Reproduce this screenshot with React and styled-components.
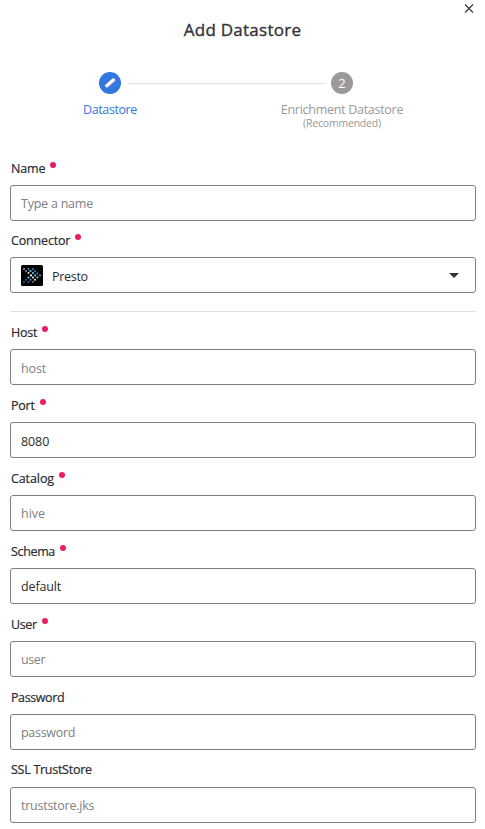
import React from "react";
import styled, { createGlobalStyle } from "styled-components";

const Global = createGlobalStyle`
  * { box-sizing: border-box; }
  body { margin: 0; background: #fff; color: #2b2b33; font-family: "Open Sans", "Noto Sans", sans-serif; font-size: 12.5px; }
`;

const Dialog = styled.main`
  width: 485px;
  height: 829px;
  overflow: hidden;
  background: #fff;
  display: flex;
  flex-direction: column;
`;
const TopBar = styled.div`
  display: flex;
  justify-content: flex-end;
  height: 16px;
  padding: 4px 11px 0 0;
`;
const CloseButton = styled.button`
  display: flex;
  width: 10px;
  height: 10px;
  padding: 0;
  border: 0;
  background: none;
`;
const Title = styled.h1`
  margin: 0;
  height: 28px;
  line-height: 28px;
  text-align: center;
  font-size: 17px;
  font-weight: 500;
  -webkit-text-stroke: 0.35px currentColor;
  color: #333338;
  letter-spacing: 0.25px;
`;
const Stepper = styled.div`
  display: grid;
  grid-template-columns: 22px 198px 22px;
  column-gap: 6px;
  margin: 28px 0 0 99px;
  height: 85px;
  align-items: start;
`;
const Step = styled.div`
  display: flex;
  flex-direction: column;
  align-items: center;
  width: 22px;
  white-space: nowrap;
  color: ${(p) => (p.$active ? "#3377e0" : "#999")};
`;
const StepDot = styled.div`
  display: flex;
  align-items: center;
  justify-content: center;
  width: 22px;
  height: 22px;
  border-radius: 50%;
  color: #fff;
  font-size: 13px;
  background: ${(p) => (p.$active ? "#3377e0" : "#9a9a9a")};
`;
const StepName = styled.div`
  margin-top: 8px;
  line-height: 16px;
  letter-spacing: ${(p) => p.$track || 0}px;
`;
const StepNote = styled.div`
  line-height: 10px;
  font-size: 10.5px;
  letter-spacing: -0.2px;
`;
const StepLine = styled.div`
  height: 1px;
  margin: 11px -1px 0 1px;
  background: #e0e0e0;
`;
const Form = styled.form`
  display: flex;
  flex-direction: column;
  gap: 9px;
  padding: 0 9px 0 10px;
`;
const Group = styled.div`
  display: flex;
  flex-direction: column;
  gap: 8px;
`;
const FieldRow = styled.div`
  display: flex;
  flex-direction: column;
`;
const Label = styled.label`
  display: flex;
  height: 28px;
  padding-left: 1px;
  line-height: ${(p) => (p.$raised ? 22 : 24)}px;
  font-weight: 500;
  -webkit-text-stroke: 0.2px currentColor;
  letter-spacing: ${(p) => p.$track || 0}px;
`;
const Required = styled.span`
  width: 6px;
  height: 6px;
  margin: 5px 0 0 5px;
  border-radius: 50%;
  background: #e91e63;
`;
const Input = styled.input`
  height: 36px;
  width: 100%;
  padding: ${(p) => (p.$lowered ? 2 : 0)}px 10px 0;
  border: 1px solid #808080;
  border-radius: 3px;
  outline: 0;
  background: #fff;
  color: #2b2b2b;
  font: inherit;
  letter-spacing: ${(p) => p.$track || 0}px;
  &::placeholder { color: #808080; opacity: 1; }
`;
const Select = styled.div`
  display: flex;
  align-items: center;
  height: 36px;
  padding: 0 16px 0 10px;
  border: 1px solid #808080;
  border-radius: 3px;
`;
const SelectValue = styled.span`
  flex: 1;
  padding: 2px 0 0 9px;
  letter-spacing: -0.3px;
`;
const Divider = styled.hr`
  width: 100%;
  height: 1px;
  margin: 9px 0 0;
  border: 0;
  background: #e0e0e0;
`;

const logoDots = [
  [3, 4, "#9a9a9a"], [7.5, 4, "#4f86d8"], [12, 4, "#3f78c8"],
  [5, 6, "#8a8a8a"], [9.5, 6, "#5dd5e4"], [14, 6.2, "#3f78c8"],
  [7.5, 8, "#d8d8d8"], [12, 8, "#5dd5e4"], [16.3, 8.3, "#3f78c8"],
  [10, 10.4, "#f0f0f0"], [14.3, 10.4, "#5dd5e4"], [19, 10.4, "#4f86d8"],
  [7.5, 12.5, "#a8c0e8"], [12, 12.5, "#f0f0f0"], [16.3, 12.5, "#5dd5e4"],
  [5, 14.7, "#34599c"], [9.5, 14.7, "#5b82cc"], [14, 14.7, "#e0e0e0"],
  [3, 17, "#34599c"], [7.5, 17, "#34599c"], [12, 17, "#4a70b8"],
];

function PrestoLogo() {
  return (
    <svg width="22" height="21" viewBox="0 0 22 21">
      <rect width="22" height="21" rx="1.5" fill="#000" />
      {logoDots.map(([x, y, c]) => (
        <circle key={`${x}-${y}`} cx={x} cy={y} r="1.05" fill={c} />
      ))}
    </svg>
  );
}

function Field({ label, track, raised, required, children }) {
  return (
    <FieldRow>
      <Label $track={track} $raised={raised}>{label}{required && <Required />}</Label>
      {children}
    </FieldRow>
  );
}

export default function App() {
  return (
    <Dialog>
      <Global />
      <TopBar>
        <CloseButton aria-label="Close">
          <svg width="10" height="10" viewBox="0 0 10 10" stroke="#333" strokeWidth="1.1"><path d="M1 0.5l8 8M9 0.5l-8 8" /></svg>
        </CloseButton>
      </TopBar>
      <Title>Add Datastore</Title>
      <Stepper>
        <Step $active>
          <StepDot $active>
            <svg width="22" height="22" viewBox="0 0 22 22" fill="none" strokeLinecap="round">
              <path d="M8.2 14.2l6.8-6" stroke="#f3a6ea" strokeWidth="2.6" />
              <path d="M7.6 13.7l6.8-6" stroke="#fff" strokeWidth="2.9" />
            </svg>
          </StepDot>
          <StepName $track={-0.4}>Datastore</StepName>
        </Step>
        <StepLine />
        <Step>
          <StepDot>2</StepDot>
          <StepName $track={-0.28}>Enrichment Datastore</StepName>
          <StepNote>(Recommended)</StepNote>
        </Step>
      </Stepper>
      <Form>
        <Group>
          <Field label="Name" track={-0.15} required><Input placeholder="Type a name" $track={-0.23} /></Field>
          <Field label="Connector" track={-0.17} required>
            <Select>
              <PrestoLogo />
              <SelectValue>Presto</SelectValue>
              <svg width="10" height="5" viewBox="0 0 10 5"><path d="M0 0h10L5 5z" fill="#333" /></svg>
            </Select>
          </Field>
        </Group>
        <Divider />
        <Field label="Host" track={-0.2} required><Input placeholder="host" $track={-0.1} $lowered /></Field>
        <Field label="Port" track={-0.25} required><Input defaultValue="8080" $track={-0.1} $lowered /></Field>
        <Field label="Catalog" track={-0.1} required><Input placeholder="hive" /></Field>
        <Field label="Schema" track={-0.35} required><Input defaultValue="default" $track={-0.13} /></Field>
        <Field label="User" track={-0.4} required><Input placeholder="user" $track={-0.4} /></Field>
        <Field label="Password" track={-0.4}><Input placeholder="password" $track={-0.3} /></Field>
        <Field label="SSL TrustStore" track={-0.27} raised><Input placeholder="truststore.jks" $track={-0.25} /></Field>
      </Form>
    </Dialog>
  );
}
